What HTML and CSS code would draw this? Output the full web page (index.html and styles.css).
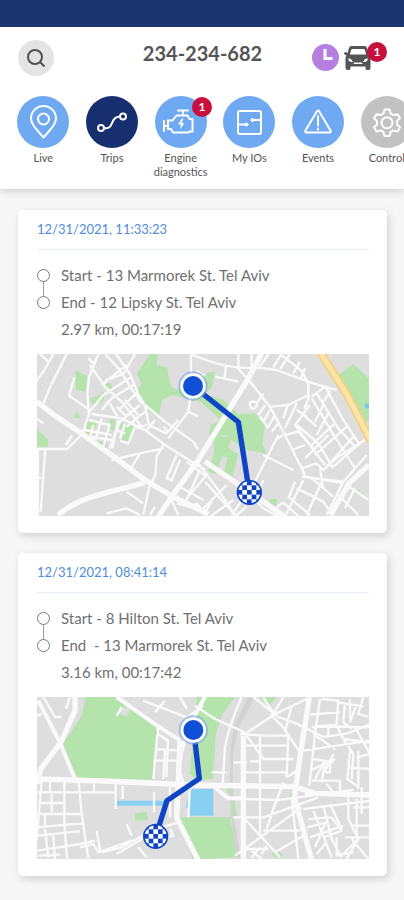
FILE: index.html
```
<!DOCTYPE html>
<html lang="en">
<head>
    <meta charset="UTF-8">
    <meta name="viewport" content="width=device-width, initial-scale=1.0">
    <title>Trips</title>
    <link rel="stylesheet" href="styles.css">
</head>
<body>
    <header class="top">
        <div class="title-bar">
            <button type="button" class="search" aria-label="Search">
                <svg viewBox="0 0 24 24" width="24" height="24"><circle cx="11" cy="11" r="7"/><path d="M16 16l4.500 4.500"/></svg>
            </button>
            <h1>234-234-682</h1>
            <div class="status">
                <svg class="clock" viewBox="0 0 27 27" width="27" height="27"><circle cx="13.500" cy="13.500" r="13.500"/><path d="M13 5v9.500h7.500"/></svg>
                <button type="button" class="car" aria-label="Vehicle alerts">
                    <svg viewBox="0 0 28 26" width="28" height="26">
                        <path fill-rule="evenodd" d="M7.500 1h13q2 0 2.500 2l1.500 5 2-1q1.500 0 1.500 2l-2.500 1.500q1 1 1 3V23q0 2-2 2h-1.500q-1.500 0-1.500-2v-1.500H6.500V23q0 2-1.500 2H3.500q-2 0-2-2v-9.500q0-2 1-3L0 9q0-2 1.500-2l2 1L5 3q.5-2 2.500-2zM8.500 4q-1 0-1.300 1L5.800 9.500h16.400L20.800 5q-.3-1-1.300-1zM4.500 13v2.500q2 2 4.500 1.500-1-3-4.500-4zm19 0q-3.500 1-4.500 4 2.500.5 4.500-1.500zM10 17.500l-.5 1.500h9l-.5-1.500z"/>
                    </svg>
                    <span class="badge">1</span>
                </button>
            </div>
        </div>
        <nav class="menu">
            <a href="#live" class="menu-item">
                <span class="circle"><svg viewBox="0 0 52 52"><path d="M26.500 41.500C22 36 14 29.500 14 22.500a12.500 12.500 0 0 1 25 0c0 7-8 13.500-12.500 19z"/><circle cx="26.500" cy="23" r="5.500"/></svg></span>
                Live
            </a>
            <a href="#trips" class="menu-item active">
                <span class="circle"><svg viewBox="0 0 52 52"><circle cx="15" cy="32" r="3"/><circle cx="37" cy="20.500" r="3"/><path d="M18 32c11 2 5-11 16-11.500"/></svg></span>
                Trips
            </a>
            <a href="#engine" class="menu-item">
                <span class="circle"><svg viewBox="0 0 52 52"><path d="M23 14.500h10M28 15v4M9 25v10M9 30h4M13 24.500h4.500l4-5h11l2 3.500h3v12.500h-3l-1 1H18l-2-3.500h-3z"/><path class="bolt" d="M27 22.500l-4 6h3l-1 5 4.500-6.500h-3l2-4.500z"/></svg></span>
                Engine diagnostics
                <span class="badge">1</span>
            </a>
            <a href="#ios" class="menu-item">
                <span class="circle"><svg viewBox="0 0 52 52"><rect x="15" y="15" width="23" height="23" rx="2"/><path d="M15 28.500h8M30 24h8"/><circle class="solid" cx="23.500" cy="28.500" r="1.500"/><circle class="solid" cx="29.500" cy="24" r="1.500"/></svg></span>
                My IOs
            </a>
            <a href="#events" class="menu-item">
                <span class="circle"><svg viewBox="0 0 52 52"><path d="M24.800 15.500L13.500 34.500q-1 2 1 2h23q2 0 1-2L27.200 15.500q-1.200-2-2.400 0z"/><path d="M26 20v9.500M26 32.500v1"/></svg></span>
                Events
            </a>
            <a href="#control" class="menu-item muted">
                <span class="circle"><svg viewBox="0 0 52 52"><path d="M23.500 13.500h5l1 4 3 1.600 4-1.200 2.500 4.300-3 2.800v3.500l3 2.800-2.500 4.300-4-1.200-3 1.600-1 4h-5l-1-4-3-1.600-4 1.200-2.500-4.300 3-2.800V25l-3-2.800 2.500-4.300 4 1.200 3-1.600z"/><circle cx="26" cy="26.700" r="5.500"/></svg></span>
                Control
            </a>
        </nav>
    </header>

    <main class="trips">
        <article class="trip">
            <h2>12/31/2021, 11:33:23</h2>
            <ul class="stops">
                <li>Start - 13 Marmorek St. Tel Aviv</li>
                <li>End - 12 Lipsky St. Tel Aviv</li>
            </ul>
            <p class="summary">2.97 km, 00:17:19</p>
            <svg class="map" viewBox="21 27 996 486" role="img" aria-label="Trip map">
                <defs>
                    <pattern id="checks" x="-7" y="-7" width="28" height="28" patternUnits="userSpaceOnUse">
                        <rect width="28" height="28" fill="#fff"/>
                        <path d="M0 0h14v14H0zM14 14h14v14H14z" fill="#0f45c4"/>
                    </pattern>
                    <g id="start-pin">
                        <circle r="44" fill="#7da3e0" opacity=".6"/>
                        <circle r="38" fill="#fff"/>
                        <circle r="30" fill="#0f4fd6"/>
                    </g>
                    <g id="end-pin">
                        <circle r="38" fill="#0f45c4"/>
                        <circle r="33" fill="url(#checks)"/>
                    </g>
                </defs>
                <g class="park">
                    <path d="M360 27h22l-2 33 32 8 3 22 10 38 50 14 60-60 20 0-10 45-20 20 55 18 45 42 50-2 30 35-8 55 12 32-70-15-50-42-52 5 5-35 30-15-60-55-87-20-28 14-10 48-30-12-20-34-17-25 15-25-15-30z"/>
                    <path d="M550 270l55 8-10 30 30 20-20 72-25-8 12-54-15-5-20 55-22-8 18-55-3-35z"/>
                    <path d="M137 76l35 16-6 48-29-6zM180 160l32-10 5-12 8 12-6 18-30 14zM222 122l14-10 12 12-10 16zM132 218l8-20 12 22zM20 250l34 34v22H20zM172 232l20-8 8 12-18 40-14-8zM238 224l18-4-4 38-15-6zM290 236l24 10-20 48-20-6zM195 286l36 8-4 16-34-14zM268 230l18 6-8 16-14-4zM228 256l18 8-8 14-14-4z"/>
                    <path d="M922 94l48-38 50 48v120l-30 25zM718 462l24 0-6 26-16-8zM975 445l12-8 3 15z"/>
                </g>
                <path d="M1005 176h14v14h-14z" fill="#7fc4ef"/>
                <g class="roads">
                    <path class="wide" d="M20 170l55 42 75 50 80 58 115 85 80 48 110 55"/>
                    <path class="wide" d="M85 510q45-40 125-62l135-35"/>
                    <path class="wide" d="M385 515l40-60 80-110 150-245 40-75"/>
                    <path d="M110 27l-50 100-25 60M20 107l22-30 28-50M30 27l25 22M20 220l20 15M205 27l-28 70-5 50 5 60-20 60-45 45H20M133 97l-16 55 60 42M20 399h14M46 312l-14 190M24 312v200M108 300l18-28M175 40l20 18"/>
                    <path d="M258 27l42 60 25 60 20 35 12 60M225 27l42 45 35 55 35 50M180 60l45 65 50 45 60 75M315 27l-35 60-55 20M290 60l-75 60M305 95l-85 55-45 55M310 120l-65 40-30 35M325 140l-60 55M260 185l30 30M240 175l22 40M285 165l40 45M330 180l-60 50-32 82M345 200l-55 45M185 207l90 13 70 35 60 45 120 75M178 225l60 15M165 255l80 15M190 240l-10 35M215 220l-18 65M240 235l-20 70M265 225l-18 85M180 275l65 10M255 255l30 10M315 245l-20 50-25-8M285 235l-15 45M345 180l60 50 85 60 15 25M355 240l55 25 35-40M400 245l14 14M320 250l30-10M350 255l25-30"/>
                    <path d="M245 345l85-20 70-15M330 325l-30 50M255 330l20 20M400 300l-20 35-4 55-18 35-18 85M415 280l60-80 8-60V27M475 200l30 15M290 440l50 35M230 505q40-10 60-15l40 20M375 485l-15 25M440 330l-30 70 20 8M450 345l-25 60M510 375l-45 100M440 420l80 45M420 455l25 55M440 475l90 25M485 490l15-15 20 25M470 350l60 45"/>
                    <path d="M480 27q120 50 195 40l65 8 110 40 70 20M555 95l70 15M588 65l-5 35M500 78l25 15M625 27v40M665 27v40M715 27l-30 45M755 27l-25 40M780 27l-30 45M810 50l-20 35M825 70l-15 35M750 27l65 50 20 40v45l-12 30M620 65l40 45 60 75 40 75 65 130"/>
                    <path d="M660 180q-5-10 10-10t10 12-15 8zM700 145l-20 30M705 180l-20 30M720 195l-20 35M735 210l-20 35M745 235l-20 25M690 215l25 35M725 185l50-5 60-30M800 175l-35 75M775 175l-15 45M835 120l0 40M845 155l40-30 55 100 50 75M860 145l65 105 50 55M845 160l60 100 70 110M840 180l-45 60 90 120M820 210l40 35M800 240l65 55 45 75M765 270l40-10 45 50M880 180l-25 50M895 205l-35 65M915 235l-75 70M950 245l-95 85M970 275l-80 90M995 290l-85 75M825 340l70-70M800 195l30 20M745 270l-70 140-70 100M700 330l90 45M735 285l25-15M880 125l20 15-20 30M785 315l40-15"/>
                    <path d="M815 370l45-15 20 20 45-40 80-50M815 395l125 15 70-80M820 405l-55 110M880 400l-50 110M800 430l80 40 30 45M775 455l65 55M795 410l-20 50M845 400l65 55M870 370l10 60M940 410l-50 100M925 450l60 60M950 420l65 45M975 430l-30 60M740 485l20-12 45 40M700 490l45 25"/>
                    <path class="wide" d="M1017 360l-60 55-55 95M525 350l110 75 130 90"/>
                    <path d="M810 355l15 40 85 15 30 5M505 355l60 80 50 75M590 420l-75 75M530 390l-60 70M525 410l95 105M545 470l-25 40M610 465l-70 50M650 485l-30 25M700 405l-25 60 30 30"/>
                </g>
                <path class="highway-edge" d="M869 20l80 125 75 145"/>
                <path class="highway" d="M869 20l80 125 75 145"/>
                <path class="route" d="M489 123l136 108 33 211"/>
                <use href="#start-pin" x="489" y="123"/>
                <use href="#end-pin" x="658" y="442"/>
            </svg>
        </article>

        <article class="trip">
            <h2>12/31/2021, 08:41:14</h2>
            <ul class="stops">
                <li>Start - 8 Hilton St. Tel Aviv</li>
                <li>End&nbsp; - 13 Marmorek St. Tel Aviv</li>
            </ul>
            <p class="summary">3.16 km, 00:17:42</p>
            <svg class="map" viewBox="21 19 996 486" role="img" aria-label="Trip map">
                <g class="park">
                    <path d="M160 19h100l125 85-6 70-12 93-225-5-45-100 60-90z"/>
                    <path d="M500 19h115l-40 55-18 60-8 130-45 5-25-20zM450 380h170l-12-90-50-5 30 8 20 35-8 60 28 110-140 10z"/>
                    <path d="M690 19h50l-25 28zM315 367l35-3 4 24-38 2zM780 310l14-5 3 16-14 3zM725 487l22-6 12 15-25 4z"/>
                </g>
                <path d="M140 19h25l-3 28-18 22zM272 52l28-2-8 30-20-10z" fill="#dedede"/>
                <path d="M480 295h70v80h-72v-20l-10-6zM260 330h150v15H260z" fill="#88d0f2"/>
                <path d="M655 19h20l-48 90-18 80-2 160 25 155h-12l-20-150V190l10-80z" fill="#d2d2d2"/>
                <g class="roads">
                    <path class="wide" d="M135 19v40l-42 95-60 80-12 45"/>
                    <path class="wide" d="M20 265l200 6 270 12 305 5 60 20 165 5"/>
                    <path class="wide" d="M450 150l-10 230 30 60 35 70M838 19l-25 160-20 140 52 190M640 135v370"/>
                    <path class="medium" d="M25 30l65 125 45 110M260 19l120 85 70 45M525 19q-65 110-75 190"/>
                    <path d="M40 19l35 60 20 0M120 19l-12 35M20 75l15-5M60 270v35M35 270l-10 120-5 60M20 305h240M103 275v120l8 110M145 265l10 105 20 135M192 280v28M278 285v40M257 280v75M30 337h70M65 310v55M20 370h135M45 370v35M20 410l90-8 45-3M25 435l90-10 35-3M20 480l130-20 45-10M45 415l10 85M70 435l5 70M25 495l65-3M200 420l10 60M150 470l40-10 15 25 100-35M215 485l60-15 90-50 80-25M260 490l85-50M290 400l15 35M325 470l25 30M420 415l10 20-35 10"/>
                    <path d="M382 105l2 25 30 20-5 110M382 130l-12 135M375 175l75 5M370 210h70M405 180l-5 85M450 19l20 35M340 30l130 50 50-35M405 30l-30 35M275 50l-15 25M372 305v60M440 215l20 60M420 290v90M480 280l-5 100"/>
                    <path d="M635 19q-40 90-50 150l-7 110M495 45l60 40 90 40M545 245h45M645 325l100 3 75-10 150-20"/>
                    <path class="medium" d="M545 283l50 40h50"/>
                    <path d="M670 19l75 60 55 20 80 40 70-10 75-30M645 130l90-60 95-45M630 130l80 5h65M650 135l50 70h90M690 135v300M645 165h125M660 212h30M610 215h40M645 245h125M775 130l-5 130M720 70l40 40 50 75M735 75l-35-55M760 19l-35 60M785 45l-20 80"/>
                    <path class="medium" d="M825 310h195"/>
                    <path d="M840 72l90-8M845 110l75-8 5-75M870 25l-12 80-20 180M860 105l160 5M875 25l50 5M920 35l80 12M945 35l-5 60 25 20M960 25l0 60M1000 19l-15 50 30 10M980 40l-20 55M895 105v30M920 105l20 40 30 45-5 75M940 145l80 10M850 130l65 45M820 180l200-30M850 205l60 10M840 240l75-35M855 265l30-55M845 270h85v45M885 215l-10 60M900 215v30h-15M910 190l-25 50M960 180l-8 85 35 25M975 110l45 80M980 200l40-10M955 230l65 5M985 180v115M890 280l25 30M995 290v80"/>
                    <path d="M770 260l40-25M760 275l-30 80-20 60M785 320l20 185M700 380l165-60M610 380h90M640 380l110 120M700 420h110M815 350l-200 145M620 490l35-15h60M690 470l-25 30M735 485l85-50M665 480l30 25M695 490l15-25M820 355l205-25M835 385l70-5 30 40-55 20M850 360l55 140M880 345l25 100 30 55M830 410l60-15M840 440l100-35M855 470l30-70M900 340l35 75M955 315v70l30 60-35 60M980 325v110M970 350h50M965 405h55M945 440h75M965 445l50 60M985 445l-50 50M920 440v55l50-10M860 490l30-35"/>
                </g>
                <path class="route" d="M491 118l17 146-97 66-34 107"/>
                <use href="#start-pin" x="490" y="118"/>
                <use href="#end-pin" x="377" y="437"/>
            </svg>
        </article>
    </main>
</body>
</html>
```
FILE: styles.css
```
body {
    margin: 0;
    background-color: #f7f7f7;
    color: #707070;
    font-family: Lato, "Open Sans", sans-serif;
    overflow-x: hidden;
}
.top {
    background-color: #ffffff;
    border-top: 27px solid #1a3570;
    box-shadow: 0 2px 8px rgba(0, 0, 0, 0.18);
    padding-bottom: 10px;
}
.title-bar {
    display: grid;
    grid-template-columns: 1fr auto 1fr;
    align-items: start;
    padding: 13px 17px 0 18px;
}
h1 {
    margin: 0;
    color: #555555;
    font-size: 20px;
    line-height: 26px;
}
button {
    border: none;
    padding: 0;
    cursor: pointer;
    font-family: inherit;
}
.search {
    display: flex;
    align-items: center;
    justify-content: center;
    width: 36px;
    height: 36px;
    border-radius: 50%;
    background-color: #e4e4e4;
}
.search svg {
    fill: none;
    stroke: #505050;
    stroke-width: 2;
}
.status {
    display: flex;
    justify-content: flex-end;
    gap: 5px;
    padding-top: 4px;
}
.clock circle {
    fill: #b57fe0;
}
.clock path {
    fill: none;
    stroke: #ffffff;
    stroke-width: 3;
}
.car {
    position: relative;
    width: 43px;
    height: 28px;
    background: none;
    text-align: left;
}
.car svg {
    display: block;
    fill: #555555;
}
.badge {
    position: absolute;
    top: -2px;
    right: 0;
    width: 20px;
    height: 20px;
    border-radius: 50%;
    background-color: #c8103c;
    color: #ffffff;
    font-size: 12px;
    font-weight: bold;
    line-height: 20px;
    text-align: center;
}
.menu {
    display: flex;
    overflow: hidden;
    padding: 20px 0 0 9px;
}
.menu-item {
    position: relative;
    flex: 0 0 17vw;
    display: flex;
    flex-direction: column;
    align-items: center;
    color: #555555;
    font-size: 11px;
    line-height: 14px;
    text-align: center;
    text-decoration: none;
}
.circle {
    width: 52px;
    height: 52px;
    margin-bottom: 3px;
    border-radius: 50%;
    background-color: #6fa9f2;
}
.circle svg {
    display: block;
    fill: none;
    stroke: #ffffff;
    stroke-width: 2;
    stroke-linejoin: round;
    stroke-linecap: round;
}
.circle .solid {
    fill: #ffffff;
    stroke-width: 1;
}
.circle .bolt {
    fill: #ffffff;
    stroke: none;
}
.active .circle {
    background-color: #172f6e;
}
.muted .circle {
    background-color: #c2c2c2;
}
.menu-item .badge {
    top: 1px;
    right: 3px;
}
.trips {
    display: flex;
    flex-direction: column;
    gap: 20px;
    padding: 21px 17px 23px 18px;
}
.trip {
    background-color: #ffffff;
    border-radius: 5px;
    box-shadow: 2px 3px 8px rgba(0, 0, 0, 0.16);
    padding: 0 18px 17px 19px;
}
.trip h2 {
    margin: 0;
    border-bottom: 1px solid #e8eef8;
    color: #4f8cdc;
    font-size: 13px;
    font-weight: normal;
    line-height: 39px;
}
.stops {
    list-style: none;
    margin: 0;
    padding: 12px 0 0;
}
.stops li {
    display: flex;
    align-items: center;
    gap: 11px;
}
.stops li::before {
    content: "";
    box-sizing: border-box;
    width: 13px;
    height: 13px;
    border: 1px solid #777777;
    border-radius: 50%;
}
.stops li,
.summary {
    font-size: 15px;
    line-height: 27px;
}
.stops li:first-child {
    background: linear-gradient(#999999, #999999) 6px 20px / 1px 7px no-repeat;
}
.stops li:last-child {
    background: linear-gradient(#999999, #999999) 6px 0 / 1px 7px no-repeat;
}
.summary {
    margin: 0 0 11px;
    padding-left: 24px;
}
.map {
    display: block;
    width: 100%;
    background-color: #dedede;
}
.park {
    fill: #b4e3ac;
}
.roads {
    fill: none;
    stroke: #fafafa;
    stroke-width: 7;
    stroke-linejoin: round;
}
.roads .medium {
    stroke-width: 12;
}
.roads .wide {
    stroke-width: 16;
}
.highway-edge {
    fill: none;
    stroke: #f4cf84;
    stroke-width: 25;
}
.highway {
    fill: none;
    stroke: #ffe5a6;
    stroke-width: 14;
}
.route {
    fill: none;
    stroke: #0f45c4;
    stroke-width: 16;
    stroke-linejoin: round;
}
```
